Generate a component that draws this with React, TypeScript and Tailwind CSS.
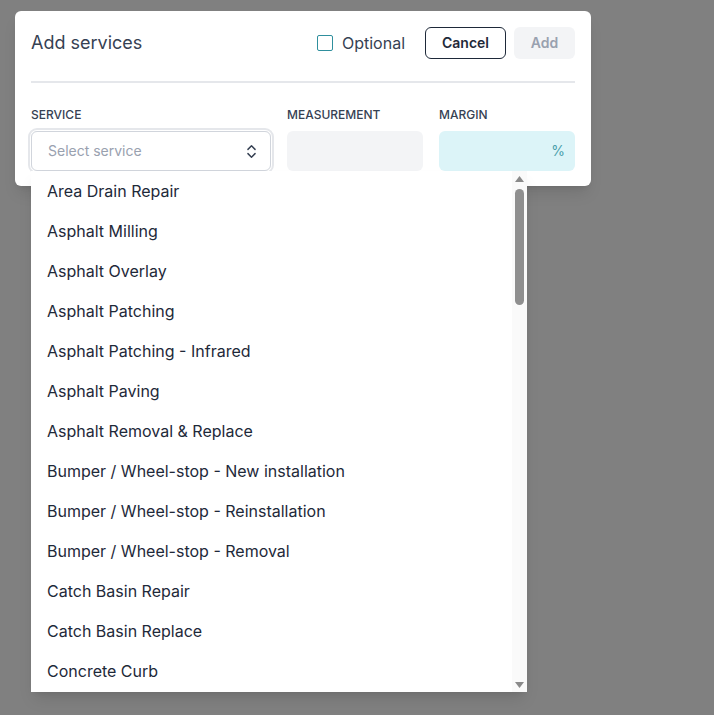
import React from 'react';
import { ChevronsUpDown } from 'lucide-react';

// only the rows that show in the open list
const services = [
  'Area Drain Repair',
  'Asphalt Milling',
  'Asphalt Overlay',
  'Asphalt Patching',
  'Asphalt Patching - Infrared',
  'Asphalt Paving',
  'Asphalt Removal & Replace',
  'Bumper / Wheel-stop - New installation',
  'Bumper / Wheel-stop - Reinstallation',
  'Bumper / Wheel-stop - Removal',
  'Catch Basin Repair',
  'Catch Basin Replace',
  'Concrete Curb',
];

const ScrollBar = () => (
  <div className="flex w-[15px] flex-col items-center bg-[#fafafa]">
    <svg width="9" height="6" viewBox="0 0 9 6" className="mt-[5px]">
      <polygon points="4.5,0 9,6 0,6" fill="#8a8a8a" />
    </svg>
    <div className="mt-[7px] h-[116px] w-[9px] rounded-full bg-[#8f8f8f]" />
    <div className="flex-1" />
    <svg width="9" height="6" viewBox="0 0 9 6" className="mb-[4px]">
      <polygon points="0,0 9,0 4.5,6" fill="#8a8a8a" />
    </svg>
  </div>
);

export default function App() {
  return (
    <div
      className="min-h-[715px] w-full bg-[#808080] pl-[15px] pt-[11px]"
      style={{ fontFamily: 'Inter, "Noto Sans", sans-serif' }}
    >
      <div className="relative w-[576px] rounded-md bg-white px-4 pt-4 pb-[15px] shadow-lg">
        {/* Header */}
        <div className="flex h-8 items-center justify-between">
          <h2 className="text-lg text-gray-700">Add services</h2>
          <div className="flex items-center">
            <label className="mr-5 flex items-center gap-[9px]">
              <span className="h-4 w-4 rounded-[2px] border border-[#2f8f9d] bg-white" />
              <span className="text-base text-gray-700">Optional</span>
            </label>
            <button className="mr-2 h-8 w-[81px] rounded-md border border-gray-800 text-sm font-semibold text-gray-800">
              Cancel
            </button>
            <button className="h-8 w-[61px] rounded-md bg-gray-100 text-sm font-semibold text-gray-400">
              Add
            </button>
          </div>
        </div>

        <div className="mt-[22px] h-[2px] bg-gray-200" />

        {/* Fields */}
        <div className="mt-6 grid grid-cols-[240px_1fr_1fr] gap-x-4">
          <div className="relative">
            <div className="mb-2 text-xs font-medium text-gray-700">SERVICE</div>
            <div className="flex h-10 items-center justify-between rounded-md border border-gray-300 pl-4 pr-[10px] ring-2 ring-gray-200 ring-offset-1">
              <span className="text-sm text-gray-400">Select service</span>
              <ChevronsUpDown size={17} strokeWidth={2} className="text-gray-700" />
            </div>
            {/* Dropdown */}
            <div className="absolute left-0 top-full z-10 flex h-[521px] w-[496px] bg-white shadow-lg">
              <div className="flex-1 overflow-hidden">
                {services.map((s) => (
                  <div key={s} className="flex h-10 items-center px-4 text-base text-gray-800">
                    {s}
                  </div>
                ))}
              </div>
              <ScrollBar />
            </div>
          </div>
          <div>
            <div className="mb-2 text-xs font-medium text-gray-700">MEASUREMENT</div>
            <div className="h-10 rounded-md bg-gray-100" />
          </div>
          <div>
            <div className="mb-2 text-xs font-medium text-gray-700">MARGIN</div>
            <div className="flex h-10 items-center justify-end rounded-md bg-[#dcf4f8] px-[10px] text-sm text-[#4a9fab]">
              %
            </div>
          </div>
        </div>
      </div>
    </div>
  );
}
